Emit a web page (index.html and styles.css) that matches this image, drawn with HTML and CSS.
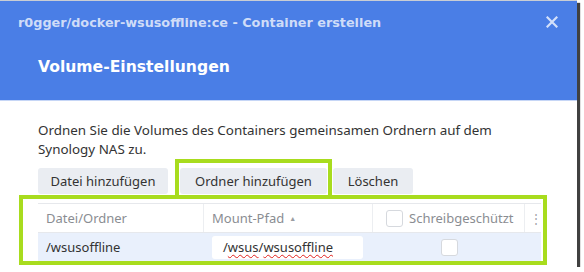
FILE: index.html
```html
<!DOCTYPE html>
<html lang="de">
<head>
  <meta charset="UTF-8">
  <title>Container erstellen</title>
  <link rel="stylesheet" href="styles.css">
</head>
<body>
<div class="fenster">
  <header class="kopf">
    <div class="kopf-zeile">
      <span class="kopf-titel">r0gger/docker-wsusoffline:ce - Container erstellen</span>
      <svg class="schliessen" width="12" height="12" viewBox="0 0 12 12">
        <path d="M1.5 1.5 L10.5 10.5 M10.5 1.5 L1.5 10.5" stroke="#d3e0fa" stroke-width="2.2" stroke-linecap="square"/>
      </svg>
    </div>
    <h1 class="kopf-schritt">Volume-Einstellungen</h1>
  </header>

  <main class="inhalt">
    <p class="beschreibung">Ordnen Sie die Volumes des Containers gemeinsamen Ordnern auf dem Synology NAS zu.</p>

    <div class="werkzeuge">
      <button class="knopf knopf-datei">Datei hinzufügen</button>
      <button class="knopf knopf-ordner markiert">Ordner hinzufügen</button>
      <button class="knopf knopf-loeschen">Löschen</button>
    </div>

    <div class="tabelle-rahmen">
      <div class="tabelle">
        <div class="zeile kopfzeile">
          <div class="zelle sp-datei">Datei/Ordner</div>
          <div class="zelle sp-pfad">Mount-Pfad <span class="pfeil">▲</span></div>
          <div class="zelle sp-schutz"><span class="kasten"></span>Schreibgeschützt</div>
          <div class="zelle sp-menue">⋮</div>
        </div>
        <div class="zeile datenzeile">
          <div class="zelle sp-datei">/wsusoffline</div>
          <div class="zelle sp-pfad">
            <div class="eingabe">/<span class="fehler">wsus</span>/<span class="fehler">wsusoffline</span></div>
          </div>
          <div class="zelle sp-schutz mitte"><span class="kasten"></span></div>
          <div class="zelle sp-menue"></div>
        </div>
      </div>
    </div>
  </main>
</div>
</body>
</html>
```

FILE: styles.css
```css
/* Grundlayout */
body {
  margin: 0;
  background-color: #ffffff;
  font-family: "Noto Sans", Arial, sans-serif;
  color: #333333;
}

.fenster {
  width: 577px;
  height: 267px;
  background-color: #ffffff;
  box-shadow: 3px 3px 1px rgba(0, 0, 0, 0.75);
  overflow: hidden;
}

/* Kopfbereich */
.kopf {
  height: 101px;
  background-color: #4a7ee6;
  border-top: 1px solid #c9cdd4;
  border-bottom: 1px solid #c6d6f6;
  box-sizing: border-box;
}

.kopf-zeile {
  display: flex;
  align-items: center;
  justify-content: space-between;
  height: 42px;
  padding: 0 19px 0 18px;
}

.kopf-titel {
  font-family: "DejaVu Sans", Verdana, sans-serif;
  font-weight: bold;
  font-size: 12.8px;
  color: #cfdcf8;
}

.kopf-schritt {
  margin: 15px 0 0 38px;
  font-family: "DejaVu Sans", Verdana, sans-serif;
  font-size: 15.6px;
  font-weight: bold;
  color: #ffffff;
}

/* Inhalt */
.inhalt {
  padding: 0 30px 0 19px;
}

.beschreibung {
  margin: 20px 0 0 19px;
  font-size: 13.4px;
  line-height: 19px;
}

.werkzeuge {
  display: flex;
  margin: 9px 0 0 19px;
}

.knopf {
  height: 26px;
  padding: 0;
  border: none;
  border-radius: 3px;
  background-color: #eaedf2;
  font-family: "Noto Sans", Arial, sans-serif;
  font-size: 13px;
  color: #333333;
}

.knopf-datei {
  width: 130px;
}

.knopf-ordner {
  width: 147px;
  margin-left: 12px;
}

.knopf-loeschen {
  width: 80px;
  margin-left: 6px;
}

.markiert {
  position: relative;
}

.markiert::after {
  content: '';
  position: absolute;
  top: -9px;
  bottom: -5px;
  left: -5px;
  right: -5px;
  border: 4px solid #a8dc1e;
}

/* Tabelle */
.tabelle-rahmen {
  margin-top: 1px;
  height: 70px;
  box-sizing: border-box;
  border: 4px solid #a8dc1e;
  padding: 4px 2px 0 15px;
}

.tabelle {
  font-size: 13px;
}

.zeile {
  display: flex;
}

.kopfzeile {
  height: 28px;
  border-top: 1px solid #e6e8ec;
  color: #8a8d92;
}

.kopfzeile .zelle {
  border-right: 1px solid #eceef1;
}

.kopfzeile .sp-menue {
  border-right: none;
}

.datenzeile {
  height: 28px;
  background-color: #e9f0fc;
  border-top: 1px solid #e6e8ec;
}

.zelle {
  display: flex;
  align-items: center;
  box-sizing: border-box;
  padding-left: 8px;
}

.sp-datei {
  width: 166px;
}

.sp-pfad {
  width: 169px;
}

.sp-schutz {
  width: 152px;
  padding-left: 13px;
}

.sp-menue {
  width: 16px;
  padding-left: 5px;
  font-size: 12px;
  color: #a0a3a8;
}

.mitte {
  justify-content: center;
  padding-left: 0;
}

.pfeil {
  font-size: 7px;
  margin-left: 5px;
  color: #9a9da2;
}

.kasten {
  width: 15px;
  height: 15px;
  margin-right: 6px;
  border: 1px solid #d6d9de;
  border-radius: 3px;
  background-color: #ffffff;
}

.mitte .kasten {
  margin-right: 0;
}

.eingabe {
  width: 151px;
  height: 23px;
  box-sizing: border-box;
  padding-left: 11px;
  line-height: 23px;
  background-color: #ffffff;
  border-radius: 3px;
  font-size: 13px;
  color: #333333;
}

.fehler {
  text-decoration: underline wavy #e0211d;
  text-decoration-thickness: 1px;
  text-underline-offset: 2px;
}
```
